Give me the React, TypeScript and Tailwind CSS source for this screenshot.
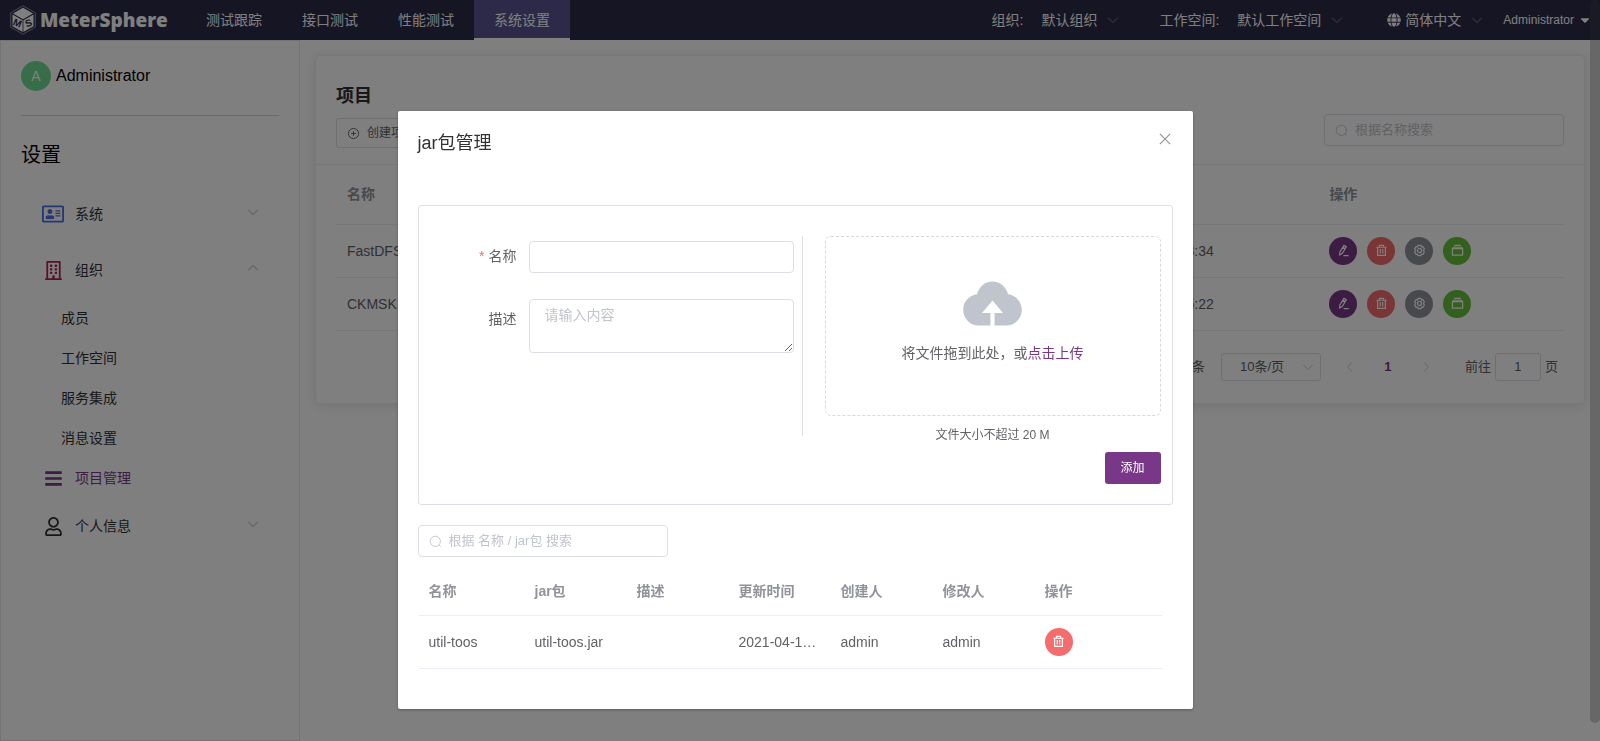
import type { ReactNode } from "react";
import { FaBars, FaCaretDown, FaGlobe, FaRegAddressCard, FaRegBuilding, FaRegUser } from "react-icons/fa";

const navItems = ["测试跟踪", "接口测试", "性能测试", "系统设置"];

const orgItems = ["成员", "工作空间", "服务集成", "消息设置"];

const projects = [
  { name: "FastDFS", description: "文件服务", workspace: "默认工作空间", updated: "2021-04-12 10:28:34" },
  { name: "CKMSK", description: "接口", workspace: "默认工作空间", updated: "2021-04-12 09:35:22" },
];

const jars = [
  { name: "util-toos", file: "util-toos.jar", description: "", updated: "2021-04-12 16:20:11", creator: "admin", modifier: "admin" },
];

function Icon({ className, children }: { className: string; children: ReactNode }) {
  return (
    <svg viewBox="0 0 14 14" fill="none" stroke="currentColor" className={className} aria-hidden="true">
      {children}
    </svg>
  );
}

function ChevronDown({ className }: { className: string }) {
  return (
    <Icon className={className}>
      <path d="M1.500 4.500 7 10l5.500-5.500" />
    </Icon>
  );
}

function ChevronUp({ className }: { className: string }) {
  return (
    <Icon className={className}>
      <path d="M1.500 9.500 7 4l5.500 5.500" />
    </Icon>
  );
}

function SearchIcon() {
  return (
    <Icon className="size-[13px] shrink-0 text-[#c0c4cc]">
      <circle cx="6.800" cy="6.800" r="5.500" />
      <path d="m10.800 10.800 1.800 1.800" />
    </Icon>
  );
}

function TrashIcon() {
  return (
    <Icon className="size-[13px]">
      <path
        strokeWidth="1.300"
        d="M1.500 3.500h11M4.800 3.500v-2h4.400v2M2.800 3.500v8.800h8.400V3.500M5.700 5.500v4.800M8.300 5.500v4.800"
      />
    </Icon>
  );
}

function EditIcon() {
  return (
    <Icon className="size-[13px]">
      <path strokeWidth="1.300" d="M7.500 1.500 10 2.900 5.800 10l-3 1.800.3-3.300zM6.300 3.600l2.500 1.400M7 12.500h5.500" />
    </Icon>
  );
}

function GearIcon() {
  return (
    <Icon className="size-[13px]">
      <path
        strokeWidth="1.300"
        d="M5.500 1.500h3l.6 1.500 1.600-.2 1.500 2.600-1 1.600 1 1.600-1.500 2.600-1.600-.2-.6 1.500h-3L4.900 11l-1.600.2-1.500-2.600 1-1.600-1-1.600 1.500-2.600 1.600.2z"
      />
      <circle cx="7" cy="7" r="2.200" strokeWidth="1.300" />
    </Icon>
  );
}

function BoxIcon() {
  return (
    <Icon className="size-[13px]">
      <path strokeWidth="1.300" d="M1.500 5h11v7h-11zM1.500 5l1.300-1.500h8.400L12.500 5M3.500 1.500h7" />
    </Icon>
  );
}

function Logo() {
  return (
    <a href="#" className="ml-2.5 flex w-44 items-center gap-1 text-white">
      <svg viewBox="0 0 26 30" className="h-[30px] w-[26px]" aria-hidden="true">
        <path d="M13 .8 25.300 7.800v14.400L13 29.200.7 22.200V7.800z" fill="none" stroke="#a9a8b8" strokeWidth=".8" />
        <path d="M13 2.800 23 8.500 13 14.200 3 8.500z" fill="#fff" />
        <path d="M2.500 9.500 12.600 15.200v11.700L2.500 21.200zM23.500 9.500 13.400 15.200v11.700l10.100-5.700z" fill="#fff" />
        <text x="7.500" y="21.500" fontSize="10" fontWeight="900" textAnchor="middle" fill="#2c2a48" transform="rotate(22 7.500 18)">M</text>
        <text x="18.500" y="21.500" fontSize="10" fontWeight="900" textAnchor="middle" fill="#2c2a48" transform="rotate(-22 18.500 18)">S</text>
      </svg>
      <span className="font-['Open_Sans',sans-serif] text-[19px] leading-6 font-extrabold">MeterSphere</span>
    </a>
  );
}

function HeaderSelect({ id, value }: { id: string; value: string }) {
  return (
    <span className="flex items-center gap-2.5">
      <select id={id} aria-label={value} className="appearance-none bg-transparent text-sm text-white">
        <option>{value}</option>
      </select>
      <ChevronDown className="size-3 text-[#909399]" />
    </span>
  );
}

function Header() {
  return (
    <header className="flex h-10 items-center bg-[#2c2a48] text-sm text-white">
      <Logo />
      <nav className="flex h-full">
        {navItems.map((item) => (
          <a
            key={item}
            href="#"
            className={
              item === "系统设置"
                ? "flex items-center border-b-2 border-white bg-[#595591] px-5 pt-0.5"
                : "flex items-center border-b-2 border-transparent px-5 pt-0.5"
            }
          >
            {item}
          </a>
        ))}
      </nav>
      <div className="ml-auto flex items-center pr-2">
        <label htmlFor="org" className="mr-[18px]">组织:</label>
        <HeaderSelect id="org" value="默认组织" />
        <label htmlFor="workspace" className="mr-[18px] ml-10">工作空间:</label>
        <HeaderSelect id="workspace" value="默认工作空间" />
        <FaGlobe className="mr-1 ml-11 size-3.5" />
        <HeaderSelect id="lang" value="简体中文" />
        <button className="ml-5 flex items-center gap-1 text-xs">
          Administrator
          <FaCaretDown className="size-3.5" />
        </button>
      </div>
    </header>
  );
}

function SubmenuTitle({ icon, label, open }: { icon: ReactNode; label: string; open?: boolean }) {
  return (
    <button className="flex h-14 w-full items-center pr-5 pl-5">
      <span className="mr-2.5 flex w-6 justify-center">{icon}</span>
      <span>{label}</span>
      {open ? (
        <ChevronUp className="mb-1 ml-auto size-3 text-[#909399]" />
      ) : (
        <ChevronDown className="mb-1 ml-auto size-3 text-[#909399]" />
      )}
    </button>
  );
}

function Sidebar() {
  return (
    <aside className="w-[300px] shrink-0 border border-[#e6e6e6] px-5 pt-5 text-sm text-[#303133]">
      <div className="flex items-center gap-[5px] border-b border-[#d3d6db] pb-6 text-base text-black">
        <span className="flex size-[30px] items-center justify-center rounded-full bg-[#70db93] text-sm text-white">A</span>
        Administrator
      </div>
      <h1 className="mt-[25px] mb-[17px] text-xl leading-7 text-black">设置</h1>
      <SubmenuTitle icon={<FaRegAddressCard className="size-[22px] text-[#4a6ee0]" />} label="系统" />
      <SubmenuTitle icon={<FaRegBuilding className="size-[19px] text-[#b0254e]" />} label="组织" open />
      <ul>
        {orgItems.map((item) => (
          <li key={item}>
            <a href="#" className="flex h-10 items-center pl-10">{item}</a>
          </li>
        ))}
      </ul>
      <a href="#" className="flex h-10 items-center pl-5 text-[#783887]">
        <span className="mr-2.5 flex w-6 justify-center">
          <FaBars className="size-[19px]" />
        </span>
        项目管理
      </a>
      <SubmenuTitle icon={<FaRegUser className="size-[19px]" />} label="个人信息" />
    </aside>
  );
}

function ProjectActions() {
  return (
    <div className="flex gap-2.5 text-white">
      <button aria-label="编辑" className="flex size-7 items-center justify-center rounded-full bg-[#783887]"><EditIcon /></button>
      <button aria-label="删除" className="flex size-7 items-center justify-center rounded-full bg-[#f56c6c]"><TrashIcon /></button>
      <button aria-label="环境配置" className="flex size-7 items-center justify-center rounded-full bg-[#909399]"><GearIcon /></button>
      <button aria-label="jar包管理" className="flex size-7 items-center justify-center rounded-full bg-[#67c23a]"><BoxIcon /></button>
    </div>
  );
}

function Pagination() {
  return (
    <div className="mt-[22px] flex items-center justify-end pr-1.5 text-[13px] text-[#606266]">
      <span>共 2 条</span>
      <div className="ml-4 flex h-7 w-[100px] items-center rounded-[3px] border border-[#dcdfe6] pr-1.5">
        <select aria-label="每页条数" className="flex-1 appearance-none bg-transparent text-center">
          <option>10条/页</option>
        </select>
        <ChevronDown className="size-3 text-[#c0c4cc]" />
      </div>
      <button aria-label="上一页" className="ml-2.5 flex w-[38px] justify-center text-[#c0c4cc]">
        <Icon className="size-3"><path d="M9.500 1.500 4 7l5.500 5.500" /></Icon>
      </button>
      <button className="w-[38px] font-bold text-[#783887]">1</button>
      <button aria-label="下一页" className="flex w-[38px] justify-center text-[#c0c4cc]">
        <Icon className="size-3"><path d="M4.500 1.500 10 7l-5.500 5.500" /></Icon>
      </button>
      <label htmlFor="page" className="mr-1 ml-5">前往</label>
      <input id="page" defaultValue="1" className="mr-1 h-7 w-[46px] rounded-[3px] border border-[#dcdfe6] text-center" />
      <span>页</span>
    </div>
  );
}

function ProjectCard() {
  return (
    <section className="rounded border border-[#ebeef5] shadow-[0_2px_12px_rgba(0,0,0,0.1)]">
      <div className="border-b border-[#ebeef5] px-5 pt-[26px] pb-4">
        <h2 className="text-lg leading-7 font-bold text-[#303133]">项目</h2>
        <div className="mt-1 flex items-start justify-between">
          <button className="mt-1 flex h-[30px] items-center gap-[7px] rounded-[3px] border border-[#dcdfe6] px-2.5 text-xs text-[#606266]">
            <Icon className="size-[13px]">
              <circle cx="7" cy="7" r="5.500" />
              <path d="M4.500 7h5M7 4.500v5" />
            </Icon>
            创建项目
          </button>
          <div className="flex h-8 w-60 items-center gap-[7px] rounded border border-[#dcdfe6] px-2.5">
            <SearchIcon />
            <input aria-label="搜索项目" placeholder="根据名称搜索" className="min-w-0 flex-1 text-[13px] placeholder:text-[#c0c4cc]" />
          </div>
        </div>
      </div>
      <div className="px-5 pb-[22px]">
        <table className="w-full table-fixed text-left text-sm text-[#606266]">
          <thead className="text-[#909399]">
            <tr className="h-[59px] border-b border-[#ebeef5]">
              <th className="px-[11px]">名称</th>
              <th className="px-[11px]">描述</th>
              <th className="px-[11px]">所属工作空间</th>
              <th className="px-[11px]">更新时间</th>
              <th className="px-[11px]">操作</th>
            </tr>
          </thead>
          <tbody>
            {projects.map((p) => (
              <tr key={p.name} className="h-[53px] border-b border-[#ebeef5]">
                <td className="px-[11px]">{p.name}</td>
                <td className="px-[11px]">{p.description}</td>
                <td className="px-[11px]">{p.workspace}</td>
                <td className="px-[11px]">{p.updated}</td>
                <td className="px-[11px]"><ProjectActions /></td>
              </tr>
            ))}
          </tbody>
        </table>
        <Pagination />
      </div>
    </section>
  );
}

function JarForm() {
  return (
    <form className="flex rounded-[3px] border border-[#dcdfe6] pt-[30px] pb-5 text-sm text-[#606266]">
      <div className="h-[200px] flex-1 border-r border-[#dcdfe6] pt-[5px] pr-2">
        <div className="flex">
          <label htmlFor="jar-name" className="w-[110px] shrink-0 pr-3 text-right leading-[30px]">
            <span className="mr-1 text-[#f56c6c]">*</span>名称
          </label>
          <input id="jar-name" className="h-8 min-w-0 flex-1 rounded border border-[#dcdfe6] px-[15px]" />
        </div>
        <div className="mt-[26px] flex">
          <label htmlFor="jar-desc" className="w-[110px] shrink-0 pr-3 text-right leading-10">描述</label>
          <textarea
            id="jar-desc"
            placeholder="请输入内容"
            className="h-[54px] min-w-0 flex-1 resize-y rounded border border-[#dcdfe6] px-[15px] py-[5px] placeholder:text-[#c0c4cc]"
          />
        </div>
      </div>
      <div className="flex w-[49%] flex-col pr-[11px] pl-[22px]">
        <div className="flex h-[180px] flex-col items-center rounded-md border border-dashed border-[#d9d9d9] pt-8">
          <svg viewBox="0 0 1024 1024" fill="#c0c4cc" className="size-[67px]" aria-hidden="true">
            <path d="M544 864V672h128L512 480 352 672h128v192H320v-1.600c-5.376.32-10.496 1.600-16 1.600A240 240 0 0 1 64 624c0-123.136 93.120-223.488 212.608-237.248A239.808 239.808 0 0 1 512 192a239.872 239.872 0 0 1 235.456 194.752c119.488 13.760 212.480 114.112 212.480 237.248a240 240 0 0 1-240 240c-5.376 0-10.560-1.280-16-1.600v1.600z" />
          </svg>
          <p className="mt-[7px] leading-5">
            将文件拖到此处，或<a href="#" className="text-[#783887]">点击上传</a>
          </p>
        </div>
        <p className="mt-[9px] text-center text-xs leading-5">文件大小不超过 20 M</p>
        <button type="button" className="mt-[7px] h-8 w-14 self-end rounded-[3px] bg-[#783887] text-xs text-white">添加</button>
      </div>
    </form>
  );
}

function JarTable() {
  return (
    <div className="mt-2.5 mr-[11px] ml-px">
      <table className="w-full table-fixed text-left text-sm text-[#606266]">
        <colgroup>
          <col className="w-[106px]" />
          <col className="w-[102px]" />
          <col className="w-[102px]" />
          <col className="w-[102px]" />
          <col className="w-[102px]" />
          <col className="w-[102px]" />
          <col />
        </colgroup>
        <thead className="text-[#909399]">
          <tr className="h-12 border-b border-[#ebeef5]">
            <th className="px-2.5">名称</th>
            <th className="px-2.5">jar包</th>
            <th className="px-2.5">描述</th>
            <th className="px-2.5">更新时间</th>
            <th className="px-2.5">创建人</th>
            <th className="px-2.5">修改人</th>
            <th className="px-2.5">操作</th>
          </tr>
        </thead>
        <tbody>
          {jars.map((jar) => (
            <tr key={jar.name} className="h-[53px] border-b border-[#ebeef5]">
              <td className="px-2.5">{jar.name}</td>
              <td className="px-2.5">{jar.file}</td>
              <td className="px-2.5">{jar.description}</td>
              <td className="truncate px-2.5">{jar.updated}</td>
              <td className="px-2.5">{jar.creator}</td>
              <td className="px-2.5">{jar.modifier}</td>
              <td className="px-2.5">
                <button aria-label="删除" className="flex size-7 items-center justify-center rounded-full bg-[#f56c6c] text-white">
                  <TrashIcon />
                </button>
              </td>
            </tr>
          ))}
        </tbody>
      </table>
    </div>
  );
}

function JarDialog() {
  return (
    <div className="fixed inset-0 flex bg-black/50">
      <div className="flex flex-1 items-start justify-center pt-[15vh]">
        <div role="dialog" aria-labelledby="dialog-title" className="w-1/2 rounded-xs bg-white shadow-[0_1px_3px_rgba(0,0,0,0.3)]">
          <div className="flex items-start justify-between px-5 pt-5 pb-2.5">
            <h2 id="dialog-title" className="text-lg leading-6 text-[#303133]">jar包管理</h2>
            <button aria-label="关闭" className="text-[#909399]">
              <Icon className="size-4"><path d="m2.500 2.500 9 9M11.500 2.500l-9 9" /></Icon>
            </button>
          </div>
          <div className="px-5 pt-10 pb-10">
            <JarForm />
            <div className="mt-5 flex h-8 w-[250px] items-center gap-[7px] rounded border border-[#dcdfe6] px-2.5">
              <SearchIcon />
              <input
                aria-label="搜索jar包"
                placeholder="根据 名称 / jar包 搜索"
                className="min-w-0 flex-1 text-[13px] placeholder:text-[#c0c4cc]"
              />
            </div>
            <JarTable />
          </div>
        </div>
      </div>
      {/* scrollbar */}
      <div className="w-2.5 pb-[18px]">
        <div className="h-full rounded-full bg-[#282828]/28" />
      </div>
    </div>
  );
}

export default function App() {
  return (
    <div className="flex min-h-screen flex-col bg-white font-['Liberation_Sans','Noto_Sans_CJK_SC',sans-serif]">
      <Header />
      <div className="flex flex-1">
        <Sidebar />
        <main className="min-w-0 flex-1 p-[15px]">
          <ProjectCard />
        </main>
      </div>
      <JarDialog />
    </div>
  );
}
